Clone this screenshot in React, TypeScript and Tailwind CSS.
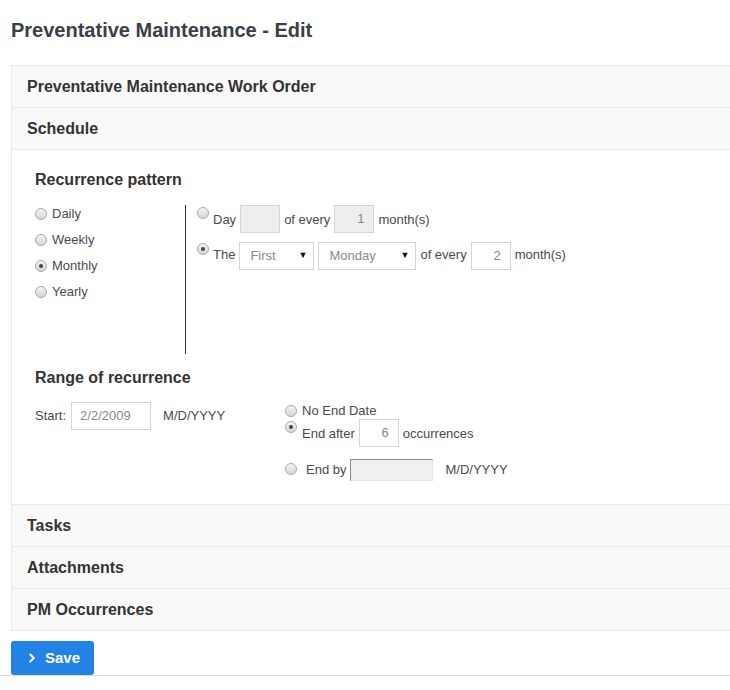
import { ChevronRight } from "lucide-react";

const Radio: React.FC<{ checked?: boolean; className?: string }> = ({
  checked,
  className = "",
}) => (
  <span
    className={`inline-flex w-[12px] h-[12px] shrink-0 items-center justify-center rounded-full border border-[#a9a9a9] bg-gradient-to-b from-[#f4f4f4] to-[#d6d6d6] ${className}`}
  >
    {checked && <span className="w-[4px] h-[4px] rounded-full bg-[#444]" />}
  </span>
);

const Box: React.FC<{
  value?: string;
  className?: string;
  disabled?: boolean;
}> = ({ value = "", className = "", disabled }) => (
  <div
    className={`h-[28px] border border-[#d4d4d4] flex items-center justify-end pr-[9px] text-[13px] text-[#888] ${
      disabled ? "bg-[#eee]" : "bg-white"
    } ${className}`}
  >
    {value}
  </div>
);

const Select: React.FC<{ value: string; className?: string }> = ({
  value,
  className = "",
}) => (
  <div
    className={`h-[28px] border border-[#d4d4d4] bg-white flex items-center justify-between pl-[10px] pr-[6px] text-[13px] text-[#888] ${className}`}
  >
    <span>{value}</span>
    <span className="text-[9px] text-[#111]">▼</span>
  </div>
);

const Header: React.FC<{ title: string }> = ({ title }) => (
  <div className="h-[41px] bg-[#f9f9f9] flex items-center pl-[15px] text-[16px] font-bold text-[#333]">
    {title}
  </div>
);

const Divider = () => <div className="h-[1px] bg-[#e6e9ed]" />;

export default function App() {
  return (
    <div
      className="w-[730px] h-[690px] bg-white overflow-hidden"
      style={{ fontFamily: '"Liberation Sans", Arial, sans-serif' }}
    >
      <h1 className="pt-[18px] pl-[11px] text-[20px] leading-[24px] font-bold text-[#3b4046]">
        Preventative Maintenance - Edit
      </h1>

      <div className="mt-[23px] ml-[11px] border-l border-t border-b border-[#e8e8ee]">
        <Header title="Preventative Maintenance Work Order" />
        <Divider />
        <Header title="Schedule" />
        <div className="h-[1px] bg-[#e9e9e9]" />

        <div className="h-[354px] bg-white pl-[23px] pt-[20px] text-[13px] text-[#4a4a4a]">
          <h2 className="text-[16px] leading-[20px] font-bold text-[#333]">
            Recurrence pattern
          </h2>
          <div className="mt-[15px] flex">
            <div className="w-[150px] flex flex-col -mt-[4px]">
              {["Daily", "Weekly", "Monthly", "Yearly"].map((l) => (
                <div key={l} className="h-[26px] flex items-center gap-[5px]">
                  <Radio checked={l === "Monthly"} />
                  <span>{l}</span>
                </div>
              ))}
            </div>
            <div className="h-[149px] border-l border-[#333] pl-[11px] flex flex-col gap-[9px]">
              <div className="flex items-center">
                <Radio className="self-start mt-[2px] mr-[4px]" />
                <span className="mt-[2px]">Day</span>
                <Box disabled className="w-[40px] ml-[4px]" />
                <span className="ml-[4px] mt-[2px]">of every</span>
                <Box disabled value="1" className="w-[40px] ml-[4px]" />
                <span className="ml-[4px] mt-[2px]">month(s)</span>
              </div>
              <div className="flex items-center">
                <Radio checked className="self-start mt-[1px] mr-[4px]" />
                <span className="mt-[-3px]">The</span>
                <Select value="First" className="w-[75px] ml-[4px]" />
                <Select value="Monday" className="w-[98px] ml-[4px]" />
                <span className="ml-[4px] mt-[-3px]">of every</span>
                <Box value="2" className="w-[40px] ml-[4px]" />
                <span className="ml-[4px] mt-[-3px]">month(s)</span>
              </div>
            </div>
          </div>

          <h2 className="mt-[14px] text-[16px] leading-[20px] font-bold text-[#333]">
            Range of recurrence
          </h2>
          <div className="mt-[14px] flex">
            <div className="w-[250px] flex items-center self-start">
              <span>Start:</span>
              <div className="ml-[5px] w-[80px] h-[28px] border border-[#d4d4d4] flex items-center pl-[8px] text-[#888]">
                2/2/2009
              </div>
              <span className="ml-[12px]">M/D/YYYY</span>
            </div>
            <div className="flex flex-col">
              <div className="h-[17px] flex items-center gap-[5px]">
                <Radio />
                <span>No End Date</span>
              </div>
              <div className="flex items-center">
                <Radio checked className="self-start mt-[2px] mr-[5px]" />
                <span className="mt-[2px]">End after</span>
                <Box value="6" className="w-[40px] ml-[4px]" />
                <span className="ml-[4px] mt-[2px]">occurrences</span>
              </div>
              <div className="mt-[12px] flex items-center">
                <Radio className="mr-[9px] -mt-[3px]" />
                <span>End by</span>
                <div className="ml-[4px] w-[83px] h-[22px] bg-[#f0f0f0] border border-[#e6e6e6] border-t-[#8a8a8a] border-l-[#8a8a8a]" />
                <span className="ml-[12px]">M/D/YYYY</span>
              </div>
            </div>
          </div>
        </div>

        <div className="h-[1px] bg-[#e9e9e9]" />
        <Header title="Tasks" />
        <Divider />
        <Header title="Attachments" />
        <Divider />
        <Header title="PM Occurrences" />
      </div>

      <div className="pt-[10px] pl-[11px] border-b border-[#dcdcdc]">
        <button className="w-[83px] h-[34px] rounded-[3px] bg-[#2383e4] text-white text-[15px] font-bold flex items-center pl-[14px] gap-[6px]">
          <ChevronRight size={14} strokeWidth={3.5} />
          Save
        </button>
      </div>
    </div>
  );
}
